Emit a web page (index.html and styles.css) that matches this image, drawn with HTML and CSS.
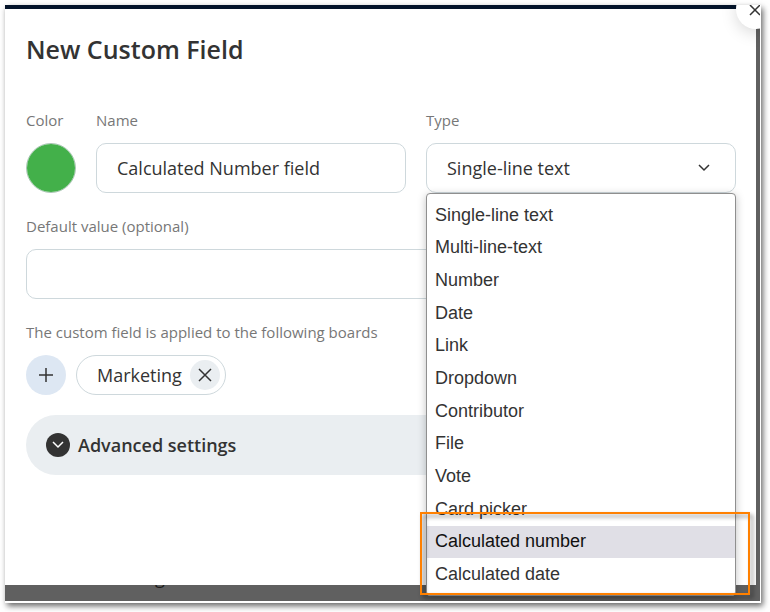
FILE: index.html
```html
<!DOCTYPE html>
<html lang="en">
<head>
    <meta charset="UTF-8">
    <meta name="viewport" content="width=device-width, initial-scale=1.0">
    <title>New Custom Field</title>
    <link rel="stylesheet" href="styles.css">
</head>
<body>
    <div class="page">
        <!-- Board text behind the dialog -->
        <span class="page-text">g</span>

        <form class="dialog">
            <h1>New Custom Field</h1>
            <button type="button" class="close" aria-label="Close">
                <svg width="14" height="14" viewBox="0 0 14 14"><path d="M1 3L11 13M11 3L1 13"/></svg>
            </button>

            <div class="field-row">
                <div class="field">
                    <label for="color">Color</label>
                    <input type="color" id="color" class="color" value="#43b04a">
                </div>
                <div class="field">
                    <label for="name">Name</label>
                    <input type="text" id="name" class="box" value="Calculated Number field">
                </div>
                <div class="field type-field">
                    <label for="type">Type</label>
                    <select id="type" class="box">
                        <option>Single-line text</option>
                    </select>
                    <svg class="arrow" width="14" height="8" viewBox="0 0 14 8"><path d="M2 1L7 6L12 1"/></svg>

                    <!-- Open type list -->
                    <ul class="menu" role="listbox" aria-label="Type">
                        <li role="option">Single-line text</li>
                        <li role="option">Multi-line-text</li>
                        <li role="option">Number</li>
                        <li role="option">Date</li>
                        <li role="option">Link</li>
                        <li role="option">Dropdown</li>
                        <li role="option">Contributor</li>
                        <li role="option">File</li>
                        <li role="option">Vote</li>
                        <li role="option">Card picker</li>
                        <li role="option" class="active" aria-selected="true">Calculated number</li>
                        <li role="option">Calculated date</li>
                    </ul>
                    <div class="highlight"></div>
                </div>
            </div>

            <div class="field">
                <label for="default">Default value (optional)</label>
                <input type="text" id="default" class="box">
            </div>

            <div class="field">
                <p class="caption">The custom field is applied to the following boards</p>
                <div class="boards">
                    <button type="button" class="add" aria-label="Add board">
                        <svg width="14" height="14" viewBox="0 0 14 14"><path d="M7 0V14M0 7H14"/></svg>
                    </button>
                    <div class="chip">
                        <span>Marketing</span>
                        <button type="button" class="remove" aria-label="Remove Marketing">
                            <svg width="14" height="14" viewBox="0 0 14 14"><path d="M1 1L13 13M13 1L1 13"/></svg>
                        </button>
                    </div>
                </div>
            </div>

            <button type="button" class="advanced">
                <svg width="24" height="24" viewBox="0 0 24 24"><circle cx="12" cy="12" r="12"/><path d="M7 9L12 14L17 9"/></svg>
                Advanced settings
            </button>
        </form>
    </div>
</body>
</html>
```

FILE: styles.css
```css
* {
    box-sizing: border-box;
}

body {
    margin: 0;
    padding: 5px 9px 9px 5px;
    background: #fff;
    color: #333;
    font-family: "Open Sans", "Noto Sans", sans-serif;
    font-size: 18px;
}

svg {
    display: block;
    fill: none;
    stroke: #333;
    stroke-width: 1.5;
}

h1,
p,
ul {
    margin: 0;
    padding: 0;
}

button,
input,
select {
    font: inherit;
    color: inherit;
}

button {
    display: flex;
    align-items: center;
    justify-content: center;
    border: none;
    padding: 0;
    cursor: pointer;
}

/* Page behind the dialog */
.page {
    position: relative;
    display: flex;
    min-height: calc(100vh - 14px);
    padding: 0 4px 16px 0;
    border-right: 1px solid #fff;
    border-bottom: 2px solid #fff;
    background: #606060;
    box-shadow: 2px 3px 6px rgba(0, 0, 0, 0.6);
    overflow: hidden;
}

.page-text {
    position: absolute;
    left: 150px;
    bottom: 12px;
    line-height: 24px;
    color: #1c1c1c;
}

/* Dialog */
.dialog {
    position: relative;
    flex: 1;
    padding: 23px 20px 20px 21px;
    border-top: 4px solid #04142a;
    background: #fff;
}

h1 {
    margin-bottom: 45px;
    font-size: 25px;
    line-height: 34px;
    font-weight: 600;
}

.close {
    position: absolute;
    top: -20px;
    right: -20px;
    width: 40px;
    height: 40px;
    border-radius: 50%;
    background: #fff;
    box-shadow: 0 4px 16px rgba(0, 0, 0, 0.15);
}

/* Fields */
.field-row {
    display: grid;
    grid-template-columns: 50px 1fr 1fr;
    gap: 20px;
}

.field {
    margin-bottom: 24px;
}

label,
.caption {
    display: block;
    margin-bottom: 14px;
    font-size: 15px;
    line-height: 18px;
    color: #777;
}

.box {
    display: block;
    width: 100%;
    height: 50px;
    padding: 0 20px;
    border: 1px solid #ced8dc;
    border-radius: 10px;
    background: #fff;
    appearance: none;
}

.color {
    display: block;
    width: 50px;
    height: 50px;
    padding: 0;
    border: 1px solid #a9c4b4;
    border-radius: 50%;
    background: #43b04a;
    overflow: hidden;
    appearance: none;
}

.color::-webkit-color-swatch-wrapper {
    padding: 0;
}

.color::-webkit-color-swatch {
    border: none;
}

/* Type list */
.type-field {
    position: relative;
}

.arrow {
    position: absolute;
    top: 53px;
    right: 25px;
    pointer-events: none;
}

.menu {
    position: absolute;
    z-index: 2;
    top: 82px;
    left: 0;
    right: 0;
    display: grid;
    grid-auto-rows: 1fr;
    height: 403px;
    padding: 5px 0 4px;
    border: 1px solid #8f8f8f;
    border-radius: 4px;
    background: #fff;
    box-shadow: 0 2px 8px rgba(0, 0, 0, 0.25);
    font-family: "Liberation Sans", Arial, sans-serif;
    list-style: none;
}

.menu li {
    display: flex;
    align-items: center;
    padding-left: 8px;
}

.menu .active {
    background: #e0dfe6;
    color: #111;
}

.highlight {
    position: absolute;
    z-index: 3;
    top: 401px;
    left: -6px;
    right: -14px;
    height: 83px;
    border: 2px solid #ff8000;
    filter: drop-shadow(3px 3px 2px rgba(0, 0, 0, 0.45));
    pointer-events: none;
}

/* Boards */
.boards {
    display: flex;
    gap: 10px;
}

.add {
    width: 40px;
    height: 40px;
    border-radius: 50%;
    background: #dde7f3;
}

.chip {
    display: flex;
    align-items: center;
    gap: 8px;
    height: 40px;
    padding: 0 5px 0 20px;
    border: 1px solid #ced8dc;
    border-radius: 20px;
}

.remove {
    width: 30px;
    height: 30px;
    border-radius: 50%;
    background: #eaeef1;
}

.field:has(.boards) {
    margin-bottom: 20px;
}

.advanced {
    justify-content: flex-start;
    gap: 8px;
    width: 100%;
    height: 60px;
    padding-left: 20px;
    border-radius: 30px;
    background: #eaeef1;
    font-weight: 600;
}

.advanced circle {
    fill: #333;
    stroke: none;
}

.advanced path {
    stroke: #fff;
}
```
